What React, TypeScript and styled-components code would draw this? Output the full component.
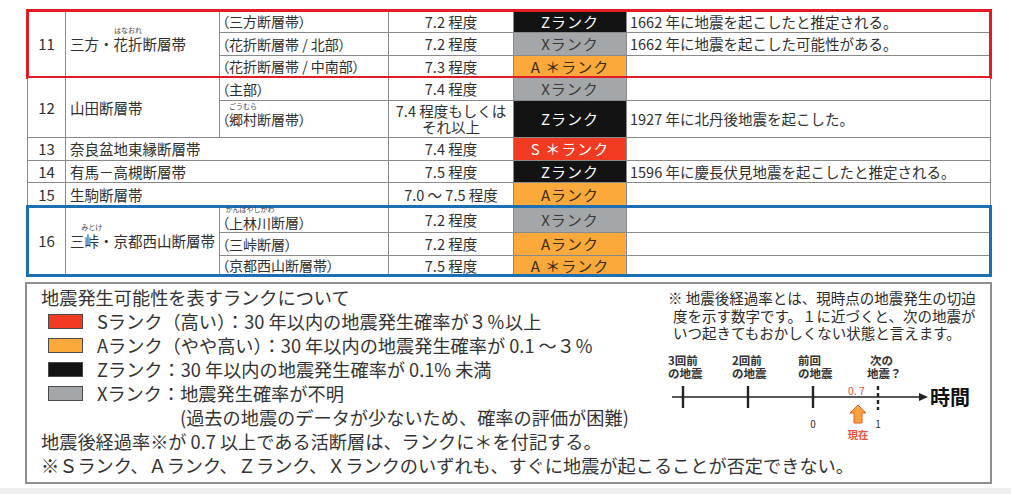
import React from "react";
import styled, { createGlobalStyle } from "styled-components";

const GlobalStyle = createGlobalStyle`
  html, body { margin: 0; padding: 0; background: #efefef; }
  body { font-family: "Noto Sans CJK JP", "Noto Sans", sans-serif; color: #2f2f2f; }
  * { box-sizing: border-box; }
`;

const Page = styled.div`
  background: #fff;
  height: 488px;
  padding: 10px 0 0 27px;
`;

const Table = styled.div`
  width: 964px;
  display: flex;
  flex-direction: column;
  gap: 1px;
  padding: 1px;
  background: #8a8a8a;
`;

const Group = styled.div<{ $rows: string; $frame?: string }>`
  display: grid;
  grid-template-columns: 37px 153px 168px 124px 112px 1fr;
  grid-template-rows: ${(p) => p.$rows};
  gap: 1px;
  background: #8a8a8a;
  ${(p) => (p.$frame ? `outline: 3px solid ${p.$frame}; outline-offset: -1px;` : "")}
`;

const Cell = styled.div`
  background: #fff;
  display: flex;
  align-items: center;
  white-space: nowrap;
  line-height: 1.2;
`;

const NumCell = styled(Cell)`
  grid-column: 1;
  grid-row: 1 / -1;
  justify-content: center;
  font-size: 15px;
`;

const NameCell = styled(Cell)<{ $wide?: boolean }>`
  grid-column: ${(p) => (p.$wide ? "2 / span 2" : "2")};
  grid-row: 1 / -1;
  padding-left: 4px;
  font-size: 14.5px;
`;

const SubCell = styled(Cell)<{ $lower?: boolean }>`
  grid-column: 3;
  padding-left: 2px;
  padding-top: ${(p) => (p.$lower ? "6px" : "0")};
  font-size: 14px;
  font-feature-settings: "palt";
`;

const MagCell = styled(Cell)`
  grid-column: 4;
  justify-content: center;
  text-align: center;
  font-size: 14.5px;
  line-height: 16px;
`;

type RankKey = "S" | "A" | "Z" | "X";

const rankColors: Record<RankKey, { bg: string; fg: string }> = {
  S: { bg: "#f13a22", fg: "#ffffff" },
  A: { bg: "#fba93b", fg: "#3a2a12" },
  Z: { bg: "#131313", fg: "#ffffff" },
  X: { bg: "#a4a7a9", fg: "#3a3a3a" },
};

const RankCell = styled(Cell)<{ $rank: RankKey }>`
  grid-column: 5;
  justify-content: center;
  font-size: 15px;
  letter-spacing: 1px;
  background: ${(p) => rankColors[p.$rank].bg};
  color: ${(p) => rankColors[p.$rank].fg};
`;

const NoteCell = styled(Cell)`
  grid-column: 6;
  padding-left: 3px;
  font-size: 14.5px;
`;

/* furigana placed over its base text */
const RubyBase = styled.span`
  position: relative;
  display: inline-block;
  line-height: 1;
`;

const RubyText = styled.span`
  position: absolute;
  left: 50%;
  bottom: 100%;
  margin-bottom: 2.5px;
  transform: translateX(-50%);
  font-size: 7px;
  line-height: 1;
  white-space: nowrap;
  color: #444;
  font-feature-settings: normal;
`;

function Ruby({ base, reading }: { base: string; reading: string }) {
  return (
    <RubyBase>
      {base}
      <RubyText>{reading}</RubyText>
    </RubyBase>
  );
}

type Row = {
  sub?: React.ReactNode;
  lower?: boolean;
  mag: React.ReactNode;
  rank: RankKey;
  label: string;
  note?: string;
};

type FaultGroup = {
  num: string;
  name: React.ReactNode;
  rows: Row[];
  heights: string;
  frame?: string;
};

const groups: FaultGroup[] = [
  {
    num: "11",
    name: (
      <>
        三方・<Ruby base="花折" reading="はなおれ" />断層帯
      </>
    ),
    heights: "21px 22px 21px",
    frame: "#e31b23",
    rows: [
      { sub: "（三方断層帯）", mag: "7.2 程度", rank: "Z", label: "Zランク", note: "1662 年に地震を起こしたと推定される。" },
      { sub: "（花折断層帯 / 北部）", mag: "7.2 程度", rank: "X", label: "Xランク", note: "1662 年に地震を起こした可能性がある。" },
      { sub: "（花折断層帯 / 中南部）", mag: "7.3 程度", rank: "A", label: "A ＊ランク" },
    ],
  },
  {
    num: "12",
    name: "山田断層帯",
    heights: "22px 36px",
    rows: [
      { sub: "（主部）", mag: "7.4 程度", rank: "X", label: "Xランク" },
      {
        sub: (
          <>
            （<Ruby base="郷村" reading="ごうむら" />断層帯）
          </>
        ),
        mag: (
          <>
            7.4 程度もしくは
            <br />
            それ以上
          </>
        ),
        rank: "Z",
        label: "Zランク",
        note: "1927 年に北丹後地震を起こした。",
      },
    ],
  },
  {
    num: "13",
    name: "奈良盆地東縁断層帯",
    heights: "22px",
    rows: [{ mag: "7.4 程度", rank: "S", label: "S ＊ランク" }],
  },
  {
    num: "14",
    name: "有馬－高槻断層帯",
    heights: "21px",
    rows: [{ mag: "7.5 程度", rank: "Z", label: "Zランク", note: "1596 年に慶長伏見地震を起こしたと推定される。" }],
  },
  {
    num: "15",
    name: "生駒断層帯",
    heights: "23px",
    rows: [{ mag: "7.0 ～ 7.5 程度", rank: "A", label: "Aランク" }],
  },
  {
    num: "16",
    name: (
      <>
        三<Ruby base="峠" reading="みとけ" />・京都西山断層帯
      </>
    ),
    heights: "25px 22px 19px",
    frame: "#1c6fb3",
    rows: [
      {
        sub: (
          <>
            （<Ruby base="上林川" reading="かんばやしがわ" />断層）
          </>
        ),
        lower: true,
        mag: "7.2 程度",
        rank: "X",
        label: "Xランク",
      },
      { sub: "（三峠断層）", mag: "7.2 程度", rank: "A", label: "Aランク" },
      { sub: "（京都西山断層帯）", mag: "7.5 程度", rank: "A", label: "A ＊ランク" },
    ],
  },
];

/* ---------- Legend ---------- */

const Legend = styled.div`
  margin: 6px 0 0 -2px;
  width: 967px;
  border: 2px solid #8e8e8e;
  padding: 1px 2px 5px 14px;
  display: grid;
  grid-template-columns: 1fr 330px;
  grid-template-areas:
    "list note"
    "rule note"
    "foot foot";
  font-size: 18.2px;
  color: #333;
`;

const List = styled.div`
  grid-area: list;
  display: flex;
  flex-direction: column;
`;

const Line = styled.div<{ $indent?: number }>`
  height: 24px;
  line-height: 24px;
  display: flex;
  align-items: center;
  white-space: nowrap;
  padding-left: ${(p) => p.$indent ?? 0}px;
`;

const RuleLine = styled(Line)`
  grid-area: rule;
`;

const FootLine = styled(Line)`
  grid-area: foot;
`;

const Swatch = styled.span<{ $rank: RankKey }>`
  width: 35px;
  height: 15px;
  margin: 0 14px 0 7px;
  border: 1px solid #4a4a4a;
  background: ${(p) => rankColors[p.$rank].bg};
  flex: none;
`;

const NoteArea = styled.div`
  grid-area: note;
  padding: 4px 0 0 10px;
`;

const NoteText = styled.div<{ $indent?: number }>`
  font-size: 14.5px;
  line-height: 17.5px;
  color: #2a2a2a;
  white-space: nowrap;
  padding-left: ${(p) => p.$indent ?? 0}px;
`;

const Diagram = styled.svg`
  display: block;
  margin: 6px 0 0 -10px;
`;

const legendRows: { rank: RankKey; text: string }[] = [
  { rank: "S", text: "Sランク（高い）：30 年以内の地震発生確率が３％以上" },
  { rank: "A", text: "Aランク（やや高い）：30 年以内の地震発生確率が 0.1 ～３％" },
  { rank: "Z", text: "Zランク：30 年以内の地震発生確率が 0.1% 未満" },
  { rank: "X", text: "Xランク：地震発生確率が不明" },
];

const FONT = '"Noto Sans CJK JP", sans-serif';

function Timeline() {
  const ticks = [25, 90, 155];
  return (
    <Diagram width="330" height="97" viewBox="0 0 330 97">
      <g fontFamily={FONT} fontWeight="700" fontSize="11.5" fill="#333">
        <text x="10" y="17">3回前</text>
        <text x="10" y="30">の地震</text>
        <text x="74" y="17">2回前</text>
        <text x="74" y="30">の地震</text>
        <text x="140" y="17">前回</text>
        <text x="140" y="30">の地震</text>
        <text x="212" y="17">次の</text>
        <text x="209" y="30">地震？</text>
      </g>
      <line x1="14" y1="49" x2="263" y2="49" stroke="#222" strokeWidth="1.6" />
      <polygon points="261,45 270,49 261,53" fill="#222" />
      {ticks.map((x) => (
        <line key={x} x1={x} y1="38" x2={x} y2="60" stroke="#222" strokeWidth="2.4" />
      ))}
      <line x1="220" y1="38" x2="220" y2="62" stroke="#222" strokeWidth="2.4" strokeDasharray="4 3" />
      <text x="190" y="47" fill="#f0503c" fontSize="10.5" fontFamily={FONT}>
        0. 7
      </text>
      <text x="272" y="57" fontSize="20" fontWeight="700" fill="#111" fontFamily={FONT}>
        時間
      </text>
      <text x="155" y="80" textAnchor="middle" fontSize="10" fill="#333" fontFamily={FONT}>
        0
      </text>
      <text x="220" y="80" textAnchor="middle" fontSize="10" fill="#333" fontFamily={FONT}>
        1
      </text>
      <path
        d="M200 57 L208 65 L204 65 L204 75 L196 75 L196 65 L192 65 Z"
        fill="#f7a33c"
        stroke="#ea5a2a"
        strokeWidth="1"
      />
      <text x="200" y="91" textAnchor="middle" fill="#f0503c" fontSize="10.5" fontWeight="700" fontFamily={FONT}>
        現在
      </text>
    </Diagram>
  );
}

export default function App() {
  return (
    <>
      <GlobalStyle />
      <Page>
        <Table>
          {groups.map((g) => {
            const single = g.rows.length === 1 && !g.rows[0].sub;
            return (
              <Group key={g.num} $rows={g.heights} $frame={g.frame}>
                <NumCell>{g.num}</NumCell>
                <NameCell $wide={single}>{g.name}</NameCell>
                {g.rows.map((r, i) => (
                  <React.Fragment key={i}>
                    {!single && <SubCell $lower={r.lower}>{r.sub}</SubCell>}
                    <MagCell>{r.mag}</MagCell>
                    <RankCell $rank={r.rank}>{r.label}</RankCell>
                    <NoteCell>{r.note}</NoteCell>
                  </React.Fragment>
                ))}
              </Group>
            );
          })}
        </Table>
        <Legend>
          <List>
            <Line>地震発生可能性を表すランクについて</Line>
            {legendRows.map((l) => (
              <Line key={l.rank}>
                <Swatch $rank={l.rank} />
                {l.text}
              </Line>
            ))}
            <Line $indent={139}>(過去の地震のデータが少ないため、確率の評価が困難)</Line>
          </List>
          <NoteArea>
            <NoteText>※ 地震後経過率とは、現時点の地震発生の切迫</NoteText>
            <NoteText $indent={5}>度を示す数字です。１に近づくと、次の地震が</NoteText>
            <NoteText $indent={5}>いつ起きてもおかしくない状態と言えます。</NoteText>
            <Timeline />
          </NoteArea>
          <RuleLine>地震後経過率※が 0.7 以上である活断層は、ランクに＊を付記する。</RuleLine>
          <FootLine>※Ｓランク、Ａランク、Ｚランク、Ｘランクのいずれも、すぐに地震が起こることが否定できない。</FootLine>
        </Legend>
      </Page>
    </>
  );
}
